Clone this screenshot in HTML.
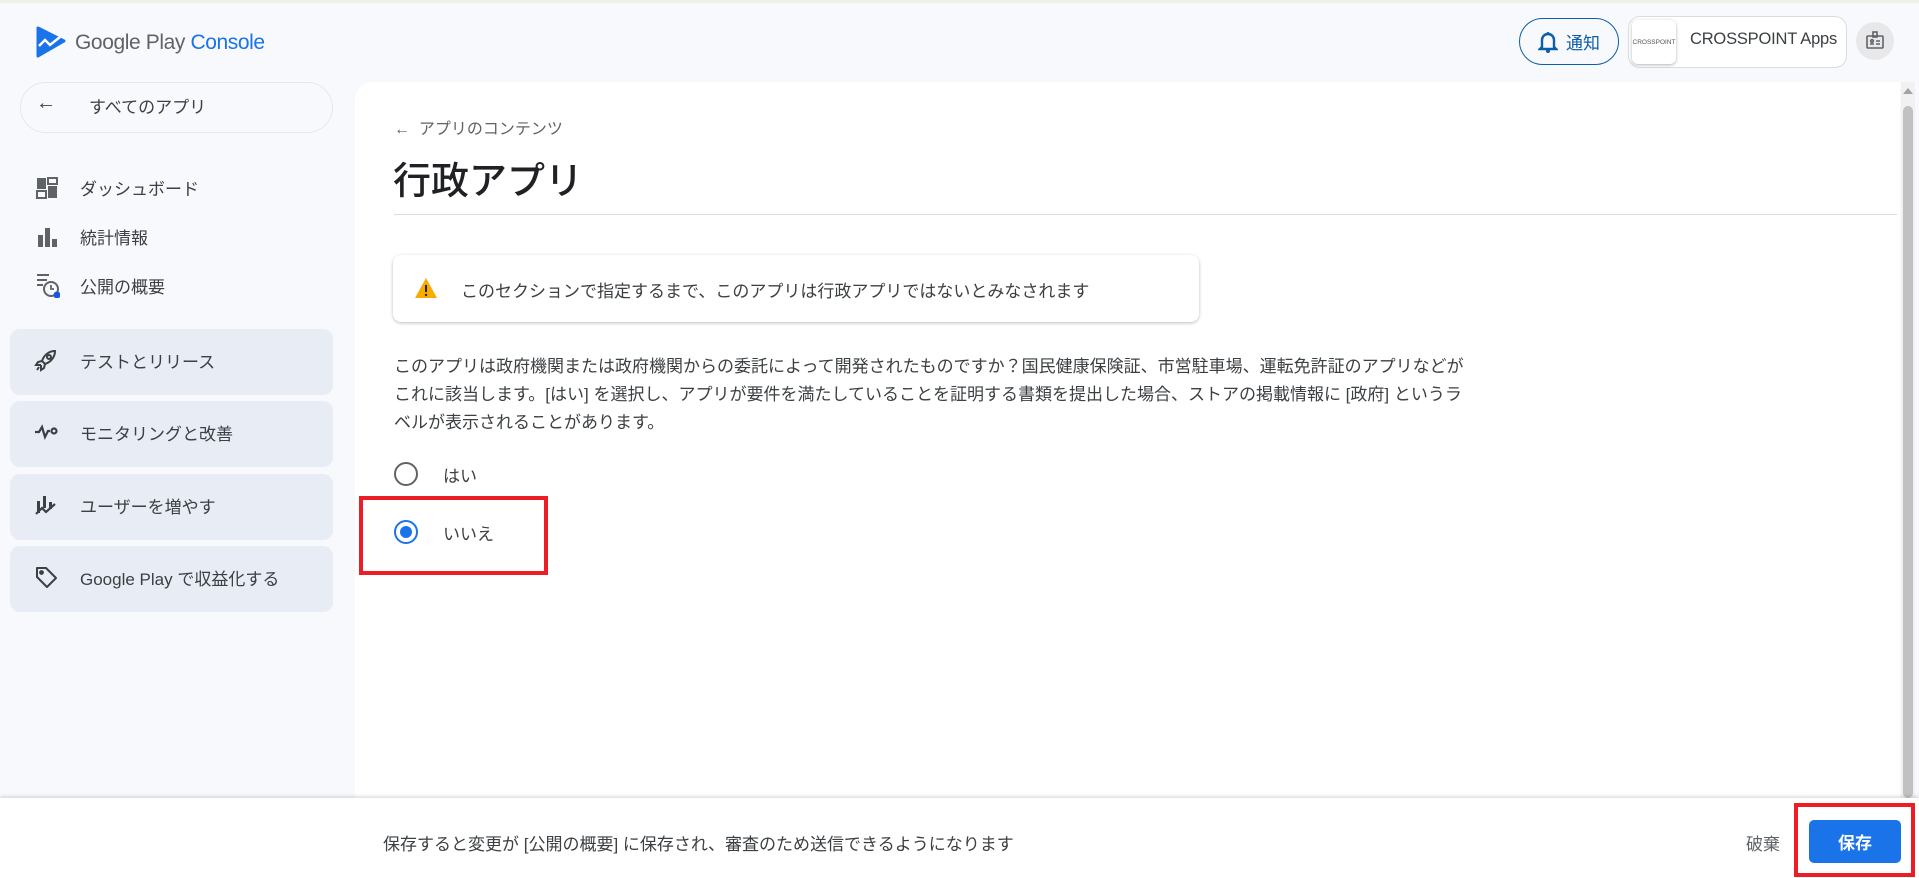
<!DOCTYPE html>
<html><head><meta charset="utf-8"><style>
*{box-sizing:border-box;margin:0;padding:0}
body{width:1919px;height:878px;overflow:hidden;background:#f8f9fd;font-family:"Liberation Sans","Noto Sans CJK JP",sans-serif;color:#3c4043;position:relative;font-size:17px}
.a{position:absolute}
.topline{left:0;top:0;width:1919px;height:3px;background:#eef0e4}
.nav{left:10px;width:323px;height:66px;background:#e8ecf4;border-radius:10px;display:flex;align-items:center;font-size:17px;color:#3c4043;padding-bottom:4px}
.nav svg{margin-left:24px;margin-right:22px}
.item{left:36px;display:flex;align-items:center;font-size:17px;color:#3c4043}
.item svg{margin-right:22px}
</style></head><body>
<div class="a topline"></div>
<svg class="a" style="left:36px;top:26px" width="30" height="32" viewBox="0 0 30 32"><path d="M2 2 L28 15 L2 30 Z" fill="#1a73e8" stroke="#1a73e8" stroke-width="3" stroke-linejoin="round"/><path d="M3 20 L9 14 L14 19 L24 11" stroke="#fff" stroke-width="2.5" fill="none"/></svg>
<div class="a" style="left:75px;top:31px;font-size:21px;color:#5f6368;letter-spacing:-0.4px">Google Play <span style="color:#1a73e8">Console</span></div>
<div class="a" style="left:20px;top:82px;width:313px;height:51px;border:1.5px solid #e3e8f0;border-radius:26px;background:#f8f9fd"></div>
<div class="a" style="left:36px;top:92px;font-size:20px;color:#3c4043">←</div>
<div class="a" style="left:89px;top:93px;font-size:17px;color:#3c4043">すべてのアプリ</div>
<div class="a item" style="top:175px"><svg width="22" height="22" viewBox="0 0 22 22" fill="#5f6368"><rect x="1" y="1" width="9" height="11"/><rect x="12" y="1" width="9" height="6" fill="none" stroke="#5f6368" stroke-width="2"/><rect x="1" y="14" width="9" height="7" fill="none" stroke="#5f6368" stroke-width="2"/><rect x="12" y="9" width="9" height="12"/></svg>ダッシュボード</div>
<div class="a item" style="top:224px"><svg width="22" height="22" viewBox="0 0 22 22" fill="#5f6368"><rect x="2" y="9" width="5" height="12"/><rect x="9" y="2" width="5" height="19"/><rect x="16" y="13" width="5" height="8"/></svg>統計情報</div>
<div class="a item" style="top:272px"><svg width="24" height="26" viewBox="0 0 24 26"><path d="M1 3h12M1 8h10M1 13h6" stroke="#5f6368" stroke-width="2"/><circle cx="15" cy="17" r="7" fill="none" stroke="#5f6368" stroke-width="2"/><path d="M15 13v4h3" stroke="#5f6368" stroke-width="1.8" fill="none"/><circle cx="21" cy="23" r="3.5" fill="#1a56db"/></svg><span style="margin-left:-2px">公開の概要</span></div>
<div class="a nav" style="top:329px"><svg width="24" height="24" viewBox="0 0 24 24" fill="none" stroke="#3c4043" stroke-width="2"><path d="M21 3c-6 0-11 4-13 10l3 3c6-2 10-7 10-13z"/><circle cx="15" cy="9" r="2"/><path d="M8 13l-4 1-2 3 5 0M11 16l-1 4-3 2 0-5M5 19l-2 3"/></svg>テストとリリース</div>
<div class="a nav" style="top:401px"><svg width="24" height="24" viewBox="0 0 24 24" fill="none" stroke="#3c4043" stroke-width="2.2"><path d="M1 12h4l3-5 3 10 3-6h2"/><circle cx="20" cy="11" r="2.5"/></svg>モニタリングと改善</div>
<div class="a nav" style="top:474px"><svg width="24" height="24" viewBox="0 0 24 24" fill="#3c4043"><rect x="3" y="8" width="3" height="12"/><rect x="9" y="3" width="3" height="12"/><rect x="15" y="9" width="3" height="7"/><path d="M2 21l6-6 4 4 9-8" stroke="#3c4043" stroke-width="2.2" fill="none"/></svg>ユーザーを増やす</div>
<div class="a nav" style="top:546px"><svg width="24" height="24" viewBox="0 0 24 24" fill="none" stroke="#3c4043" stroke-width="2"><path d="M3 3h9l10 10-9 9L3 12z" stroke-linejoin="round"/><circle cx="7.5" cy="7.5" r="1.4" fill="#3c4043"/></svg>Google Play で収益化する</div>
<div class="a" style="left:1519px;top:18px;width:100px;height:47px;border:1.5px solid #0b5ea8;border-radius:24px;display:flex;align-items:center;justify-content:center;color:#0b5ea8;font-size:17px"><svg width="20" height="22" viewBox="0 0 20 22" style="margin-right:8px"><path d="M4 16V9a6 6 0 0 1 12 0v7l2 2H2z" fill="none" stroke="#0b5ea8" stroke-width="2.4"/><circle cx="10" cy="20" r="2" fill="#0b5ea8"/><circle cx="10" cy="2.5" r="1.5" fill="#0b5ea8"/></svg>通知</div>
<div class="a" style="left:1628px;top:16px;width:219px;height:52px;border:1px solid #dadce0;border-radius:12px;background:#fff"></div>
<div class="a" style="left:1632px;top:20px;width:44px;height:44px;border-radius:6px;background:#fff;box-shadow:0 1px 3px rgba(0,0,0,.3);font-size:6.5px;color:#555;display:flex;align-items:center;justify-content:center">CROSSPOINT</div>
<div class="a" style="left:1690px;top:30px;font-size:16.5px;color:#3c4043;letter-spacing:-0.2px">CROSSPOINT Apps</div>
<div class="a" style="left:1856px;top:22px;width:38px;height:38px;border-radius:50%;background:#e8e8ea"></div>
<svg class="a" style="left:1865px;top:31px" width="20" height="20" viewBox="0 0 20 20" fill="none" stroke="#5f6368" stroke-width="1.6"><rect x="2" y="5" width="16" height="12" rx="1"/><rect x="8" y="1" width="4" height="5"/><path d="M5 13h4M11 10h4M11 13h4"/><circle cx="7" cy="10" r="1.3"/></svg>
<div class="a" style="left:355px;top:82px;width:1545px;height:720px;background:#fff;border-top-left-radius:18px"></div>
<div class="a" style="left:1901px;top:82px;width:14px;height:716px;background:#f1f1f1"></div>
<div class="a" style="left:1903px;top:88px;width:0;height:0;border-left:5px solid transparent;border-right:5px solid transparent;border-bottom:6px solid #a3a3a3"></div>
<div class="a" style="left:1903px;top:106px;width:10px;height:692px;background:#c1c1c1;border-radius:5px"></div>
<div class="a" style="left:394px;top:115px;font-size:16px;color:#5f6368">←&nbsp; アプリのコンテンツ</div>
<div class="a" style="left:393px;top:150px;font-size:38px;color:#202124;font-weight:500">行政アプリ</div>
<div class="a" style="left:394px;top:214px;width:1503px;height:1px;background:#dadce0"></div>
<div class="a" style="left:393px;top:255px;width:806px;height:67px;background:#fff;border-radius:8px;box-shadow:0 1px 3px rgba(60,64,67,.35)"></div>
<svg class="a" style="left:414px;top:277px" width="24" height="22" viewBox="0 0 24 22"><path d="M12 1L23 21H1z" fill="#f9ab00"/><path d="M12 8v7" stroke="#202124" stroke-width="2"/><circle cx="12" cy="18" r="1.2" fill="#202124"/></svg>
<div class="a" style="left:461px;top:277px;font-size:17px;color:#3c4043">このセクションで指定するまで、このアプリは行政アプリではないとみなされます</div>
<div class="a" style="left:394px;top:353px;width:1080px;font-size:17px;line-height:28px;color:#3c4043">このアプリは政府機関または政府機関からの委託によって開発されたものですか？国民健康保険証、市営駐車場、運転免許証のアプリなどがこれに該当します。[はい] を選択し、アプリが要件を満たしていることを証明する書類を提出した場合、ストアの掲載情報に [政府] というラベルが表示されることがあります。</div>
<div class="a" style="left:394px;top:462px;width:24px;height:24px;border:2.2px solid #5f6368;border-radius:50%"></div>
<div class="a" style="left:443px;top:462px;font-size:17px">はい</div>
<div class="a" style="left:394px;top:520px;width:24px;height:24px;border:2.2px solid #1a73e8;border-radius:50%"></div>
<div class="a" style="left:400px;top:526px;width:12px;height:12px;background:#1a73e8;border-radius:50%"></div>
<div class="a" style="left:443px;top:520px;font-size:17px">いいえ</div>
<div class="a" style="left:359px;top:496px;width:189px;height:79px;border:4px solid #ee1c25"></div>
<div class="a" style="left:0;top:798px;width:1919px;height:80px;background:#fff;box-shadow:0 -2px 3px rgba(0,0,0,.12)"></div>
<div class="a" style="left:383px;top:830px;font-size:17px;color:#3c4043">保存すると変更が [公開の概要] に保存され、審査のため送信できるようになります</div>
<div class="a" style="left:1746px;top:830px;font-size:17px;color:#5f6368">破棄</div>
<div class="a" style="left:1809px;top:820px;width:92px;height:43px;background:#1a73e8;border-radius:5px;color:#fff;font-size:17px;font-weight:bold;display:flex;align-items:center;justify-content:center">保存</div>
<div class="a" style="left:1794px;top:803px;width:121px;height:74px;border:4px solid #ee1c25"></div>
</body></html>
